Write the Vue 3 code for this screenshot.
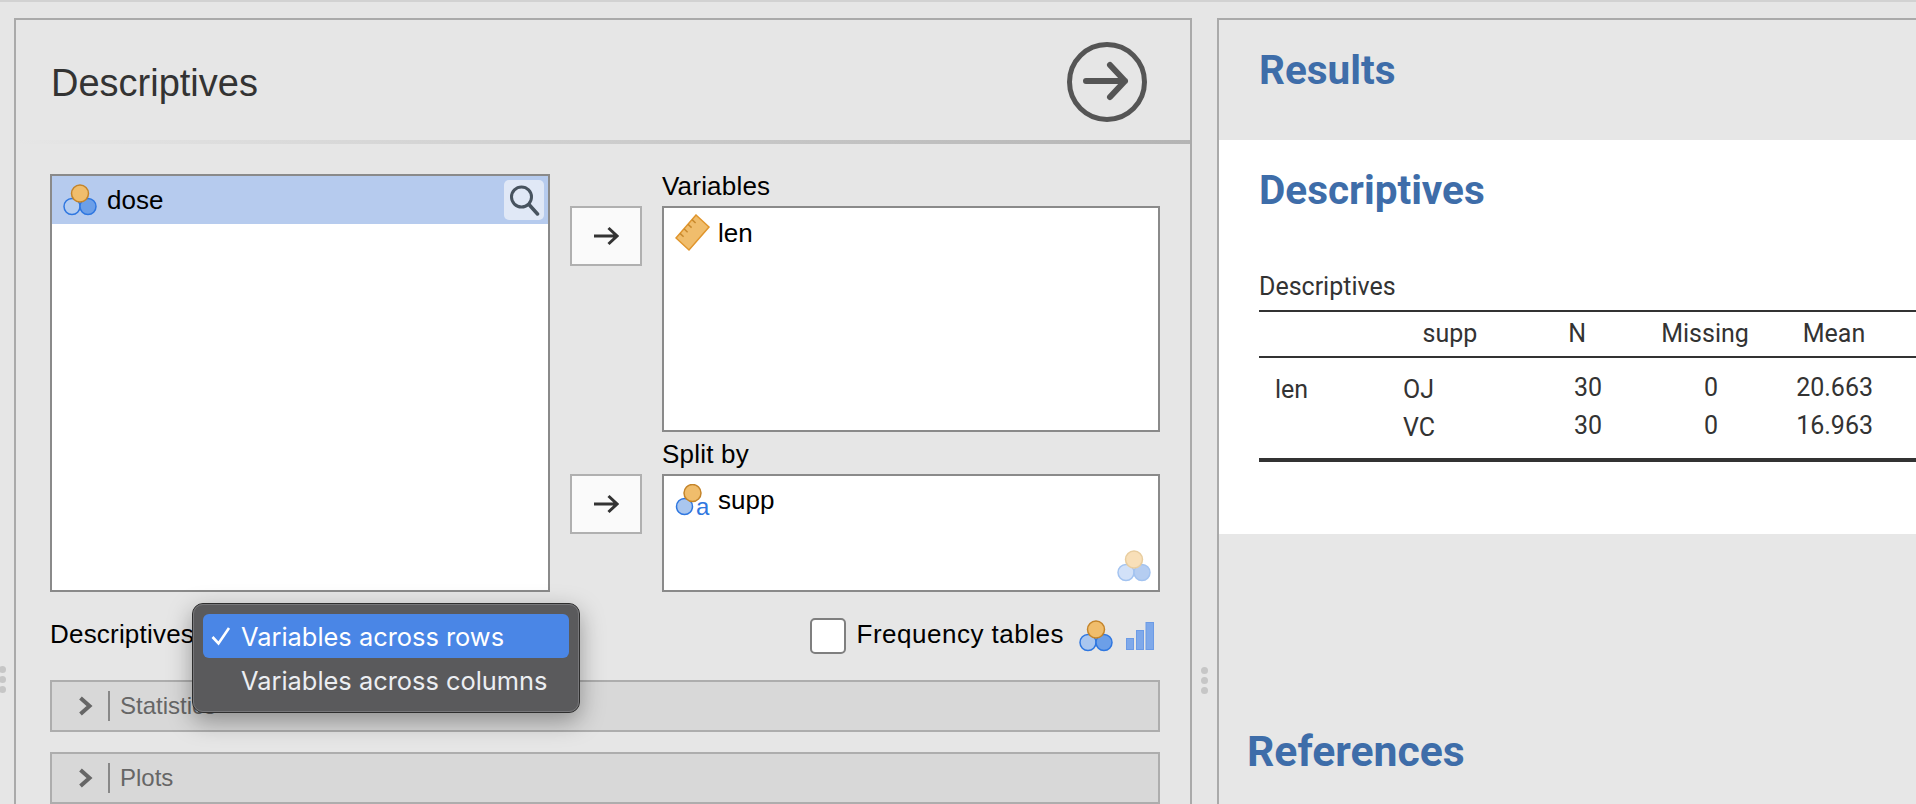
<script setup>
const rows = [
  { label: 'len', group: 'OJ', n: 30, missing: 0, mean: '20.663' },
  { label: '', group: 'VC', n: 30, missing: 0, mean: '16.963' }
]
</script>

<template>
  <div class="app">
    <div class="topstrip"></div>
    <div class="workspace">
      <section class="options">
        <header class="opt-head">
          <h1>Descriptives</h1>
          <svg class="go" width="80" height="80" viewBox="0 0 80 80">
            <circle cx="40" cy="40" r="37.5" fill="none" stroke="#555" stroke-width="5" />
            <path d="M19 39H58M43 23 58 39 43 55" fill="none" stroke="#555" stroke-width="6" stroke-linecap="round" stroke-linejoin="round" />
          </svg>
        </header>
        <div class="opt-body">
          <div class="selector">
            <div class="listbox source">
              <div class="row selected">
                <svg class="ic" width="34" height="32" viewBox="0 0 34 32">
                  <circle cx="9" cy="22.500" r="8" fill="#b5cdf0" stroke="#2f77e0" stroke-width="1.500" />
                  <circle cx="25" cy="22.500" r="8" fill="#6c9fe8" stroke="#2f77e0" stroke-width="1.500" />
                  <circle cx="17" cy="9.500" r="8.500" fill="#f0bd6c" stroke="#c4842a" stroke-width="1.500" />
                </svg>
                <span class="rowtext">dose</span>
                <span class="search">
                  <svg width="32" height="32" viewBox="0 0 32 32">
                    <circle cx="13.500" cy="13" r="10" fill="none" stroke="#47535f" stroke-width="3" />
                    <path d="M21 20.500 29.500 30" stroke="#47535f" stroke-width="3.500" stroke-linecap="round" />
                  </svg>
                </span>
              </div>
            </div>
            <div class="targets">
              <div class="target t-vars">
                <button class="move"><svg width="26" height="20" viewBox="0 0 26 20"><path d="M1 10H24M15.500 2 24 10 15.500 18" fill="none" stroke="#333" stroke-width="3" /></svg></button>
                <div class="tcol">
                  <label>Variables</label>
                  <div class="listbox v-box">
                    <div class="cell">
                      <svg class="ruler" width="36" height="38" viewBox="0 0 36 38">
                        <path d="M21 1 34 13 14 36 1 24Z" fill="#f0bd6c" stroke="#e0952c" stroke-width="1.500" />
                        <path d="M5 19.400l3.600 3.400M9 14.800l3.600 3.400M13 10.200l3.600 3.400M17 5.600l3.600 3.400" stroke="#c98a2e" stroke-width="1.500" />
                      </svg>
                      <span class="rowtext">len</span>
                    </div>
                  </div>
                </div>
              </div>
              <div class="target t-split">
                <button class="move"><svg width="26" height="20" viewBox="0 0 26 20"><path d="M1 10H24M15.500 2 24 10 15.500 18" fill="none" stroke="#333" stroke-width="3" /></svg></button>
                <div class="tcol">
                  <label>Split by</label>
                  <div class="listbox s-box">
                    <div class="cell">
                      <svg class="nominal" width="36" height="34" viewBox="0 0 36 34">
                        <circle cx="9.500" cy="22.500" r="8" fill="#a9c6ef" stroke="#2f77e0" stroke-width="1.500" />
                        <circle cx="17.500" cy="9" r="8.500" fill="#f0bd6c" stroke="#c4842a" stroke-width="1.500" />
                        <text x="21" y="31" class="a-glyph">a</text>
                      </svg>
                      <span class="rowtext">supp</span>
                    </div>
                    <svg class="hint" width="34" height="32" viewBox="0 0 34 32">
                      <circle cx="9" cy="22.500" r="8" fill="#d2e1f8" stroke="#a3c3f0" stroke-width="1.500" />
                      <circle cx="25" cy="22.500" r="8" fill="#b5cdf1" stroke="#a3c3f0" stroke-width="1.500" />
                      <circle cx="17" cy="9.500" r="8.500" fill="#f8dfb8" stroke="#e8cd9f" stroke-width="1.500" />
                    </svg>
                  </div>
                </div>
              </div>
            </div>
          </div>
          <div class="optrow">
            <span class="optlabel">Descriptives</span>
            <div class="freq">
              <span class="check"></span>
              <span class="freqtext">Frequency tables</span>
              <svg width="34" height="32" viewBox="0 0 34 32">
                <circle cx="9" cy="22.500" r="8" fill="#a9c6ef" stroke="#2f77e0" stroke-width="1.500" />
                <circle cx="25" cy="22.500" r="8" fill="#6c9fe8" stroke="#2f77e0" stroke-width="1.500" />
                <circle cx="17" cy="9.500" r="8.500" fill="#f0bd6c" stroke="#c4842a" stroke-width="1.500" />
              </svg>
              <svg class="bars" width="28" height="28" viewBox="0 0 28 28">
                <rect x="0.500" y="16.500" width="7" height="11" fill="#7fa9ea" stroke="#6c9be6" />
                <rect x="10.500" y="8.500" width="7" height="19" fill="#7fa9ea" stroke="#6c9be6" />
                <rect x="20" y="0.500" width="7.500" height="27" fill="#7fa9ea" stroke="#6c9be6" />
              </svg>
            </div>
          </div>
          <div class="section">
            <svg width="15" height="20" viewBox="0 0 15 20"><path d="M2.500 2 11.500 10 2.500 18" fill="none" stroke="#666" stroke-width="4" /></svg>
            <i class="sep"></i><span>Statistics</span>
          </div>
          <div class="section">
            <svg width="15" height="20" viewBox="0 0 15 20"><path d="M2.500 2 11.500 10 2.500 18" fill="none" stroke="#666" stroke-width="4" /></svg>
            <i class="sep"></i><span>Plots</span>
          </div>
        </div>
        <div class="menu">
          <div class="item active">
            <span class="tick"><svg width="20" height="20" viewBox="0 0 20 20"><path d="M1.500 11 7.500 17.500 18 2" fill="none" stroke="#fff" stroke-width="2.600" /></svg></span>Variables across rows
          </div>
          <div class="item"><span class="tick"></span>Variables across columns</div>
        </div>
      </section>

      <div class="splitter"><i></i><i></i><i></i></div>

      <section class="results">
        <div class="res-head"><h2>Results</h2></div>
        <div class="res-body">
          <h2>Descriptives</h2>
          <div class="tbl-title">Descriptives</div>
          <div class="tbl">
            <div class="thead">
              <span></span>
              <span class="center">supp</span>
              <span class="h-n">N</span>
              <span class="center">Missing</span>
              <span class="center">Mean</span>
            </div>
            <div class="tbody">
              <div v-for="r in rows" :key="r.group" class="trow">
                <span class="c-label low">{{ r.label }}</span>
                <span class="low">{{ r.group }}</span>
                <span class="c-n">{{ r.n }}</span>
                <span class="c-m">{{ r.missing }}</span>
                <span class="c-mean">{{ r.mean }}</span>
              </div>
            </div>
          </div>
        </div>
        <h2 class="refs">References</h2>
      </section>
    </div>
    <div class="leftdots"><i></i><i></i><i></i></div>
  </div>
</template>

<style>
html, body { margin: 0; background: #e6e6e6; overflow: hidden; }
</style>

<style scoped>
.app { position: relative; width: 1916px; height: 804px; overflow: hidden; background: #e6e6e6; font-family: "Liberation Sans", Arial, sans-serif; color: #000; }
.topstrip { height: 2px; background: #d2d2d2; }
.workspace { display: flex; height: 802px; padding: 16px 0 0 14px; box-sizing: border-box; }
.options { position: relative; width: 1178px; flex: none; box-sizing: border-box; border: 2px solid #aaa; border-bottom: 0; }
.opt-head { height: 124px; box-sizing: border-box; display: flex; align-items: center; justify-content: space-between; padding: 6px 43px 0 35px; border-bottom: 4px solid; border-image: linear-gradient(to right, #e6e6e6, #b4b4b4) 1; }
.opt-head h1 { margin: 0; font-size: 38px; font-weight: 400; color: #333; }
.go { display: block; margin-top: -2px; }
.opt-body { padding: 30px 28px 0 34px; }
.selector { display: flex; height: 418px; }
.listbox { background: #fff; border: 2px solid #8a8a8a; box-sizing: border-box; }
.source { width: 500px; height: 418px; flex: none; }
.row { display: flex; align-items: center; height: 48px; padding: 0 4px 0 11px; }
.selected { background: #b6cbee; }
.rowtext { font-size: 26px; }
.row .rowtext { margin-left: 10px; flex: 1; }
.search { width: 40px; height: 40px; background: #e0e8f6; border-radius: 5px; display: flex; align-items: center; justify-content: center; }
.targets { margin-left: 20px; width: 590px; flex: none; }
.target { display: flex; }
.t-vars { height: 268px; }
.t-split { height: 150px; }
.move { width: 72px; height: 60px; background: #fafafa; border: 2px solid #b0b0b0; box-sizing: border-box; padding: 0; display: flex; align-items: center; justify-content: center; margin-top: 32px; flex: none; }
.tcol { margin-left: 20px; width: 498px; display: flex; flex-direction: column; }
.tcol label { font-size: 26px; height: 32px; line-height: 24px; letter-spacing: 0.2px; }
.v-box { height: 226px; }
.s-box { height: 118px; position: relative; }
.cell { display: flex; align-items: flex-start; padding: 6px 0 0 11px; }
.nominal { margin-top: 2px; }
.cell .rowtext { margin-left: 7px; line-height: 28px; margin-top: 5px; }
.s-box .rowtext { margin-top: 4px; }
.a-glyph { font-size: 24px; fill: #2f77e0; font-family: "Liberation Sans", Arial, sans-serif; }
.hint { position: absolute; right: 7px; bottom: 8px; }
.optrow { display: flex; align-items: center; justify-content: space-between; height: 88px; }
.optlabel { font-size: 26px; letter-spacing: 0.2px; padding-bottom: 4px; white-space: nowrap; }
.freq { display: flex; align-items: center; padding-right: 8px; }
.check { width: 36px; height: 36px; box-sizing: border-box; background: #fff; border: 2px solid #7f7f7f; border-radius: 5px; margin-right: 11px; }
.freqtext { font-size: 26px; letter-spacing: 0.5px; margin-right: 15px; padding-bottom: 4px; }
.bars { margin-left: 13px; }
.section { display: flex; align-items: center; height: 52px; box-sizing: border-box; background: #d8d8d8; border: 2px solid #adadad; padding-left: 26px; width: 1110px; color: #666; font-size: 24px; margin-bottom: 20px; }
.sep { width: 2px; height: 30px; background: #888; margin: 0 10px 0 15px; }
.menu { position: absolute; left: 176px; top: 583px; width: 388px; height: 110px; box-sizing: border-box; background: #5a5a5c; border: 1px solid #2e2e2e; outline: 1px solid #77777a; outline-offset: -2px; border-radius: 11px; padding: 10px; box-shadow: 0 8px 24px rgba(0,0,0,.35); font-family: Inter, "Liberation Sans", sans-serif; }
.item { height: 44px; display: flex; align-items: center; color: #eceef2; font-size: 25.4px; border-radius: 6px; }
.active { background: #4a86e6; color: #fff; }
.tick { width: 38px; padding-left: 8px; box-sizing: border-box; flex: none; display: flex; }
.splitter { width: 25px; flex: none; display: flex; flex-direction: column; gap: 3px; align-items: center; padding-top: 649px; box-sizing: border-box; }
.splitter i, .leftdots i { width: 7px; height: 7px; border-radius: 50%; background: #c6c6c6; display: block; }
.leftdots { position: absolute; left: -1px; top: 666px; display: flex; flex-direction: column; gap: 3px; }
.results { flex: 1; min-width: 0; border: 2px solid #aaa; border-width: 2px 0 0 2px; background: #e7e7e7; }
.res-head { height: 120px; padding: 27px 0 0 40px; box-sizing: border-box; }
h2 { margin: 0; font-family: Roboto, sans-serif; font-weight: 700; font-size: 40.5px; color: #3e6da9; line-height: 46px; }
.res-body { background: #fff; height: 394px; box-sizing: border-box; padding: 27px 0 0 40px; }
.tbl-title { font-family: Roboto, sans-serif; font-size: 25px; color: #333; margin-top: 59px; line-height: 30px; height: 38px; }
.tbl { color: #333; font-family: Roboto, sans-serif; font-size: 25px; }
.thead, .trow { display: grid; grid-template-columns: 144px 94px 126px 164px 94px 1fr; }
.thead { height: 48px; box-sizing: border-box; border-top: 2px solid #333; border-bottom: 2px solid #333; line-height: 44px; }
.center { text-align: center; }
.h-n { text-align: right; padding-right: 37px; }
.tbody { height: 104px; box-sizing: border-box; padding-top: 11px; border-bottom: 4px solid #333; }
.trow { grid-template-rows: 38px; line-height: 38px; }
.low { padding-top: 2px; }
.c-label { padding-left: 16px; }
.c-n { text-align: right; padding-right: 21px; }
.c-m { text-align: center; padding-left: 12px; }
.c-mean { text-align: right; padding-right: 8px; }
.refs { font-size: 42.7px; line-height: 50px; margin: 192px 0 0 28px; }
</style>
